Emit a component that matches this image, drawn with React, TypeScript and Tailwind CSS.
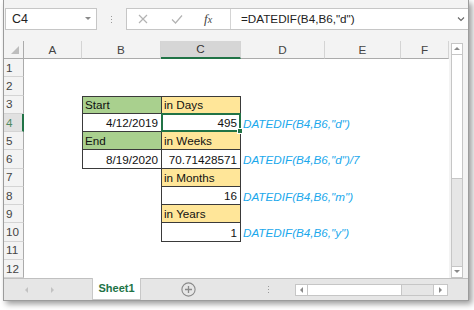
import type { ReactNode } from 'react'

type Cell = { text: string; fill?: 'green' | 'yellow'; right?: boolean }
type Row = { b?: Cell; c?: Cell; d?: string }

const COLS = ['A', 'B', 'C', 'D', 'E', 'F']

const DATA: Record<number, Row> = {
  3: { b: { text: 'Start', fill: 'green' }, c: { text: 'in Days', fill: 'yellow' } },
  4: { b: { text: '4/12/2019', right: true }, c: { text: '495', right: true }, d: 'DATEDIF(B4,B6,"d")' },
  5: { b: { text: 'End', fill: 'green' }, c: { text: 'in Weeks', fill: 'yellow' } },
  6: { b: { text: '8/19/2020', right: true }, c: { text: '70.71428571', right: true }, d: 'DATEDIF(B4,B6,"d")/7' },
  7: { c: { text: 'in Months', fill: 'yellow' } },
  8: { c: { text: '16', right: true }, d: 'DATEDIF(B4,B6,"m")' },
  9: { c: { text: 'in Years', fill: 'yellow' } },
  10: { c: { text: '1', right: true }, d: 'DATEDIF(B4,B6,"y")' },
}

function Tri({ dir, color = '#8a8a8a' }: { dir: 'up' | 'down' | 'left' | 'right'; color?: string }) {
  const pts = {
    up: '1,5 7,5 4,2',
    down: '1,2 7,2 4,5',
    left: '5,1 5,7 2,4',
    right: '2,1 2,7 5,4',
  }[dir]
  return (
    <svg width="8" height="8" viewBox="0 0 8 8">
      <polygon points={pts} fill={color} />
    </svg>
  )
}

function DataCell({ row, cell, col }: { row: number; cell?: Cell; col: 'b' | 'c' }) {
  if (!cell) return <div />
  const fill = cell.fill === 'green' ? 'bg-[#a9d08e]' : cell.fill === 'yellow' ? 'bg-[#ffe699]' : 'bg-white'
  const top = row === 3 ? 'border-t' : ''
  const side = col === 'c' ? 'border-l border-r' : 'border-l'
  const align = cell.right ? 'justify-end pr-[3px]' : 'justify-start pl-[2px]'
  const selected = row === 4 && col === 'c'
  return (
    <div className={`relative flex items-center pt-[1px] border-b border-[#3a3a3a] ${side} ${top} ${fill} ${align}`}>
      <span className="leading-none text-[#111]">{cell.text}</span>
      {selected && (
        <div className="absolute -left-[1px] -top-[1px] -right-[1px] -bottom-[1px] z-10 border-2 border-[#217346]">
          <div className="absolute -right-[4px] -bottom-[4px] w-[6px] h-[6px] bg-[#217346] border border-white" />
        </div>
      )}
    </div>
  )
}

function RowHeader({ n }: { n: number }) {
  const sel = n === 4
  return (
    <div
      className={`flex items-center pl-[2px] border-b border-[#d4d4d4] ${
        sel ? 'bg-[#e1e1e1] text-[#4f8a62] border-r-2 border-r-[#217346]' : 'bg-[#f3f3f3] text-[#444] border-r border-r-[#ababab]'
      }`}
    >
      {n}
    </div>
  )
}

export default function App() {
  const rows: ReactNode[] = []
  for (let n = 1; n <= 12; n++) {
    const r = DATA[n] ?? {}
    rows.push(
      <RowHeader key={`h${n}`} n={n} />,
      <div key={`a${n}`} />,
      <DataCell key={`b${n}`} row={n} cell={r.b} col="b" />,
      <DataCell key={`c${n}`} row={n} cell={r.c} col="c" />,
      <div key={`d${n}`} className="flex items-center pt-[1px] pl-[2px] whitespace-nowrap overflow-visible">
        {r.d && <span className="italic leading-none text-[#1aa8ec]">{r.d}</span>}
      </div>,
      <div key={`e${n}`} />,
      <div key={`f${n}`} />,
    )
  }

  return (
    <div className="w-[474px] h-[310px] bg-white overflow-hidden font-['Liberation_Sans',Arial,sans-serif]">
      <div className="ml-[3px] w-[466px] h-[301px] flex flex-col bg-[#f3f3f3] border-l border-r border-b border-[#9c9c9c] shadow-[3px_3px_6px_rgba(0,0,0,0.4)]">
        {/* Formula bar */}
        <div className="h-[41px] shrink-0 flex items-start pt-[8px] pl-[1px]">
          <div className="w-[92px] h-[22px] flex items-center justify-between bg-white border border-[#c6c6c6] pl-[6px] pr-[4px] text-[12.5px] text-[#222]">
            <span>C4</span>
            <Tri dir="down" />
          </div>
          <div className="w-[29px] h-[22px] flex flex-col items-center justify-center gap-[2px]">
            <span className="w-[1px] h-[1px] bg-[#9a9a9a]" />
            <span className="w-[1px] h-[1px] bg-[#9a9a9a]" />
            <span className="w-[1px] h-[1px] bg-[#9a9a9a]" />
          </div>
          <div className="flex-1 h-[22px] flex items-center bg-white border-t border-b border-l border-[#c6c6c6]">
            <div className="w-[104px] h-full flex items-center border-r border-[#d4d4d4]">
              <svg width="10" height="10" viewBox="0 0 10 10" className="ml-[11px]">
                <path d="M1 1 L9 9 M9 1 L1 9" stroke="#b3b3b3" strokeWidth="1.2" />
              </svg>
              <svg width="12" height="10" viewBox="0 0 12 10" className="ml-[23px]">
                <path d="M1 5.5 L4.5 9 L11 1.5" stroke="#b3b3b3" strokeWidth="1.2" fill="none" />
              </svg>
              <span className="ml-[21px] font-['Liberation_Serif',serif] italic text-[13px] text-[#444]">
                f<span className="text-[10px]">x</span>
              </span>
            </div>
            <span className="ml-[10px] flex-1 text-[11.7px] text-[#222]">=DATEDIF(B4,B6,"d")</span>
            <svg width="8" height="6" viewBox="0 0 8 6" className="mr-[3px]">
              <path d="M1 1.5 L4 4.5 L7 1.5" stroke="#666" strokeWidth="1.1" fill="none" />
            </svg>
          </div>
        </div>

        {/* Sheet area */}
        <div className="flex h-[237px] shrink-0">
          <div className="grid grid-cols-[20px_58px_79px_80px_84px_76px_48px] grid-rows-[18px_repeat(12,18.25px)] bg-white text-[11.7px]">
            <div className="relative bg-[#f3f3f3] border-r border-b border-[#ababab]">
              <svg width="10" height="10" viewBox="0 0 10 10" className="absolute right-[3px] bottom-[3px]">
                <polygon points="1,9 9,9 9,1" fill="#bdbdbd" />
              </svg>
            </div>
            {COLS.map((c) => (
              <div
                key={c}
                className={`flex items-center justify-center border-r border-r-[#d4d4d4] ${
                  c === 'C' ? 'bg-[#d6d6d6] border-b-2 border-b-[#217346] text-[#333]' : 'bg-[#f3f3f3] border-b border-b-[#ababab] text-[#444]'
                }`}
              >
                {c}
              </div>
            ))}
            {rows}
          </div>

          {/* Vertical scroll bar */}
          <div className="ml-[2px] mt-[2px] w-[12px] flex flex-col">
            <div className="h-[12px] flex items-center justify-center bg-white border border-[#c6c6c6]">
              <Tri dir="up" />
            </div>
            <div className="h-[124px] bg-white border-x border-b border-[#c6c6c6]" />
            <div className="flex-1 bg-[#e6e6e6] border-x border-[#c6c6c6]" />
            <div className="h-[12px] flex items-center justify-center bg-white border border-[#c6c6c6]">
              <Tri dir="down" />
            </div>
          </div>
        </div>

        {/* Sheet tabs */}
        <div className="flex-1 flex items-stretch bg-[#e6e6e6] border-t border-[#c0c0c0]">
          <div className="w-[88px] flex items-center gap-[18px] pl-[19px]">
            <Tri dir="left" color="#c2c2c2" />
            <Tri dir="right" color="#c2c2c2" />
          </div>
          <div className="-mt-[1px] w-[49px] flex items-center justify-center bg-white border-x border-b border-[#c8c8c8] text-[11px] font-bold text-[#217346]">
            Sheet1
          </div>
          <div className="w-[100px] flex items-center pl-[40px]">
            <svg width="15" height="15" viewBox="0 0 15 15">
              <circle cx="7.5" cy="7.5" r="6.6" fill="none" stroke="#8a8a8a" strokeWidth="1.1" />
              <path d="M7.5 4 V11 M4 7.5 H11" stroke="#8a8a8a" strokeWidth="1.3" />
            </svg>
          </div>
          <div className="w-[54px] flex flex-col items-center justify-center gap-[2px]">
            <span className="w-[1px] h-[1px] bg-[#9a9a9a]" />
            <span className="w-[1px] h-[1px] bg-[#9a9a9a]" />
            <span className="w-[1px] h-[1px] bg-[#9a9a9a]" />
          </div>
          <div className="w-[153px] flex items-center">
            <div className="w-full h-[12px] flex">
              <div className="w-[13px] flex items-center justify-center bg-white border border-[#c6c6c6]">
                <Tri dir="left" />
              </div>
              <div className="w-[94px] bg-white border-y border-r border-[#c6c6c6]" />
              <div className="flex-1 bg-[#e6e6e6] border-y border-[#c6c6c6]" />
              <div className="w-[15px] flex items-center justify-center bg-white border border-[#c6c6c6]">
                <Tri dir="right" />
              </div>
            </div>
          </div>
        </div>
      </div>
    </div>
  )
}
